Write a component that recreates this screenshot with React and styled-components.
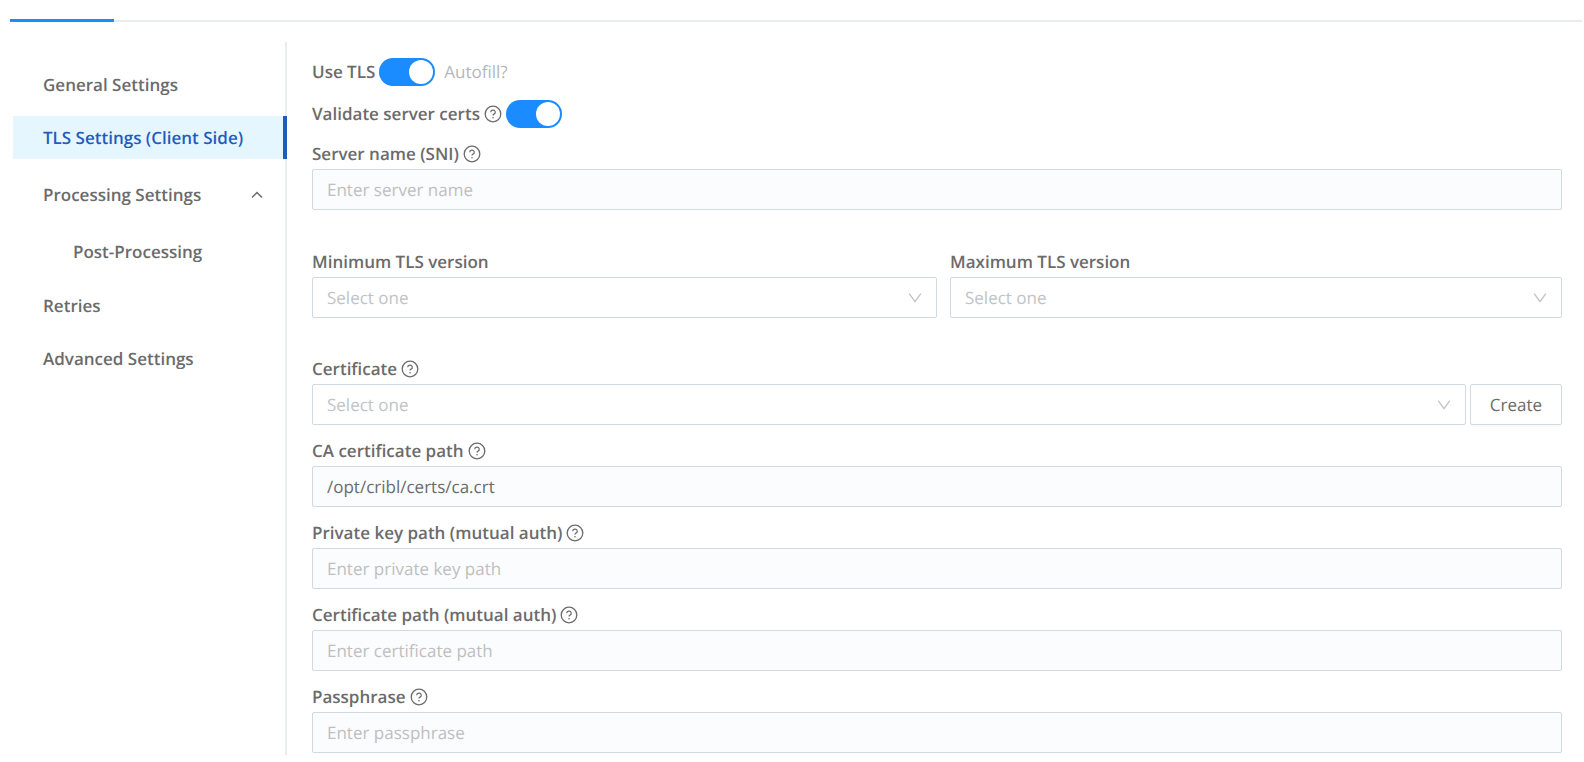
import { useId } from "react";
import styled, { createGlobalStyle } from "styled-components";

const GlobalStyle = createGlobalStyle`
    * {
        box-sizing: border-box;
    }

    body {
        margin: 0;
        background: #ffffff;
        color: #6b6b6b;
        font: normal 400 17px/24px "Open Sans", sans-serif;
        text-rendering: geometricPrecision;
    }

    input,
    select,
    button {
        font: inherit;
        color: inherit;
        text-rendering: inherit;
    }
`;

const Page = styled.div`
    display: flex;
    flex-direction: column;
    min-height: 100vh;
    padding: 19px 2px 7px 10px;
`;

const TabBar = styled.div`
    height: 3px;
    background: linear-gradient(#e8edf2, #e8edf2) 0 1px / 100% 2px no-repeat;
`;

const ActiveTab = styled.div`
    width: 104px;
    height: 3px;
    background: #1b8cff;
`;

const Body = styled.div`
    display: flex;
    flex: 1;
    margin-top: 20px;
`;

const SideNav = styled.nav`
    display: flex;
    flex-direction: column;
    flex: none;
    gap: 10px;
    width: 277px;
    padding: 21px 0 0 3px;
    background: linear-gradient(#e8edf2, #e8edf2) right / 2px 100% no-repeat;
`;

const NavGroup = styled.div`
    display: flex;
    flex-direction: column;
    gap: 14px;
    padding: 4px 0 1px;
`;

const NavLink = styled.a`
    display: flex;
    align-items: center;
    justify-content: space-between;
    height: 43px;
    padding: 0 20px 0 ${(props) => (props.$nested ? "60px" : "30px")};
    border-right: 4px solid ${(props) => (props.$active ? "#1f5cbd" : "transparent")};
    background: ${(props) => (props.$active ? "#e6f6ff" : "transparent")};
    color: ${(props) => (props.$active ? "#1f5cbd" : "#6b6b6b")};
    font-weight: 600;
    text-decoration: none;
`;

const Form = styled.form`
    display: flex;
    flex-direction: column;
    flex: 1;
    min-width: 0;
    padding: 16px 20px 0 25px;
`;

const SwitchRow = styled.div`
    display: flex;
    align-items: center;
    gap: 4px;
    height: 28px;
    margin-bottom: 14px;
`;

const Switch = styled.input.attrs({ type: "checkbox", role: "switch" })`
    appearance: none;
    flex: none;
    width: 56px;
    height: 28px;
    margin: 0;
    padding: 2px;
    border-radius: 14px;
    background: #bfbfbf;
    cursor: pointer;

    &::before {
        content: "";
        display: block;
        width: 24px;
        height: 24px;
        border-radius: 50%;
        background: #ffffff;
    }

    &:checked {
        background: #1b8cff;
    }

    &:checked::before {
        margin-left: auto;
    }
`;

const Hint = styled.span`
    margin-left: 5px;
    color: #b3b8bd;
`;

const Field = styled.div`
    display: flex;
    flex-direction: column;
    gap: 3px;
    min-width: 0;
    margin-bottom: ${(props) => (props.$spaced ? "40px" : "14px")};

    form > &:last-child {
        margin-bottom: 0;
    }
`;

const LabelRow = styled.div`
    display: flex;
    align-items: center;
    gap: 4px;
    height: 24px;
`;

const Label = styled.label`
    font-weight: 600;
    white-space: nowrap;
`;

const TextInput = styled.input`
    width: 100%;
    height: 41px;
    padding: 0 14px;
    border: 1px solid #cfdae3;
    border-radius: 2px;
    background: #fafcfe;

    &::placeholder {
        color: #bfbfbf;
        opacity: 1;
    }
`;

const SelectBox = styled.div`
    display: grid;
    flex: 1;
    align-items: center;

    > * {
        grid-area: 1 / 1;
    }

    > svg {
        justify-self: end;
        margin-right: 15px;
        pointer-events: none;
    }
`;

const Select = styled.select`
    appearance: none;
    width: 100%;
    height: 41px;
    padding: 0 40px 0 14px;
    border: 1px solid #cfdae3;
    border-radius: 2px;
    background: #ffffff;
    color: #bfc3c7;
`;

const Columns = styled.div`
    display: grid;
    grid-template-columns: 1fr 1fr;
    margin-bottom: 25px;

    > :last-child {
        padding-left: 13px;
    }
`;

const Inline = styled.div`
    display: flex;
    gap: 4px;
`;

const CreateButton = styled.button`
    width: 92px;
    height: 41px;
    padding: 0;
    border: 1px solid #cfdae3;
    border-radius: 2px;
    background: #ffffff;
    box-shadow: 0 2px 0 #00000005;
    cursor: pointer;
`;

const HelpIcon = () => (
    <svg width="18" height="18" viewBox="0 0 18 18" fill="none" stroke="#6b6b6b" aria-hidden="true">
        <circle cx="9" cy="9" r="7.8" strokeWidth="1.3" />
        <path d="M6.7 7.2a2.3 2.1 0 1 1 3.3 1.9c-.7.35-1 .7-1 1.5" strokeWidth="1.2" />
        <circle cx="9" cy="12.7" r=".8" fill="#6b6b6b" stroke="none" />
    </svg>
);

const DownIcon = () => (
    <svg width="14" height="14" viewBox="0 0 14 14" fill="none" stroke="#bfc3c7" strokeWidth="1.3" aria-hidden="true">
        <path d="M1.2 2.7 7 10.6l5.8-7.9" />
    </svg>
);

const UpIcon = () => (
    <svg width="12" height="12" viewBox="0 0 12 12" fill="none" stroke="#6b6b6b" strokeWidth="1.5" aria-hidden="true">
        <path d="m1 8.5 5-5 5 5" />
    </svg>
);

const TextField = ({ label, spaced, ...rest }) => {
    const id = useId();
    return (
        <Field $spaced={spaced}>
            <LabelRow>
                <Label htmlFor={id}>{label}</Label>
                <HelpIcon />
            </LabelRow>
            <TextInput id={id} type="text" {...rest} />
        </Field>
    );
};

const SelectField = ({ label, help, options, children }) => {
    const id = useId();
    return (
        <Field>
            <LabelRow>
                <Label htmlFor={id}>{label}</Label>
                {help && <HelpIcon />}
            </LabelRow>
            <Inline>
                <SelectBox>
                    <Select id={id} defaultValue="">
                        <option value="" disabled>
                            Select one
                        </option>
                        {options.map((option) => (
                            <option key={option}>{option}</option>
                        ))}
                    </Select>
                    <DownIcon />
                </SelectBox>
                {children}
            </Inline>
        </Field>
    );
};

const tlsVersions = ["TLSv1", "TLSv1.1", "TLSv1.2", "TLSv1.3"];

const App = () => {
    return (
        <Page>
            <GlobalStyle />
            <TabBar>
                <ActiveTab />
            </TabBar>
            <Body>
                <SideNav>
                    <NavLink href="#general">General Settings</NavLink>
                    <NavLink href="#tls" $active aria-current="page">
                        TLS Settings (Client Side)
                    </NavLink>
                    <NavGroup>
                        <NavLink href="#processing">
                            Processing Settings
                            <UpIcon />
                        </NavLink>
                        <NavLink href="#post-processing" $nested>
                            Post-Processing
                        </NavLink>
                    </NavGroup>
                    <NavLink href="#retries">Retries</NavLink>
                    <NavLink href="#advanced">Advanced Settings</NavLink>
                </SideNav>
                <Form onSubmit={(e) => e.preventDefault()}>
                    <SwitchRow>
                        <Label htmlFor="use-tls">Use TLS</Label>
                        <Switch id="use-tls" defaultChecked />
                        <Hint>Autofill?</Hint>
                    </SwitchRow>
                    <SwitchRow>
                        <Label htmlFor="validate-certs">Validate server certs</Label>
                        <HelpIcon />
                        <Switch id="validate-certs" defaultChecked />
                    </SwitchRow>
                    <TextField label="Server name (SNI)" placeholder="Enter server name" spaced />
                    <Columns>
                        <SelectField label="Minimum TLS version" options={tlsVersions} />
                        <SelectField label="Maximum TLS version" options={tlsVersions} />
                    </Columns>
                    <SelectField label="Certificate" options={[]} help>
                        <CreateButton type="button">Create</CreateButton>
                    </SelectField>
                    <TextField label="CA certificate path" defaultValue="/opt/cribl/certs/ca.crt" />
                    <TextField label="Private key path (mutual auth)" placeholder="Enter private key path" />
                    <TextField label="Certificate path (mutual auth)" placeholder="Enter certificate path" />
                    <TextField label="Passphrase" placeholder="Enter passphrase" />
                </Form>
            </Body>
        </Page>
    );
};

export default App;
